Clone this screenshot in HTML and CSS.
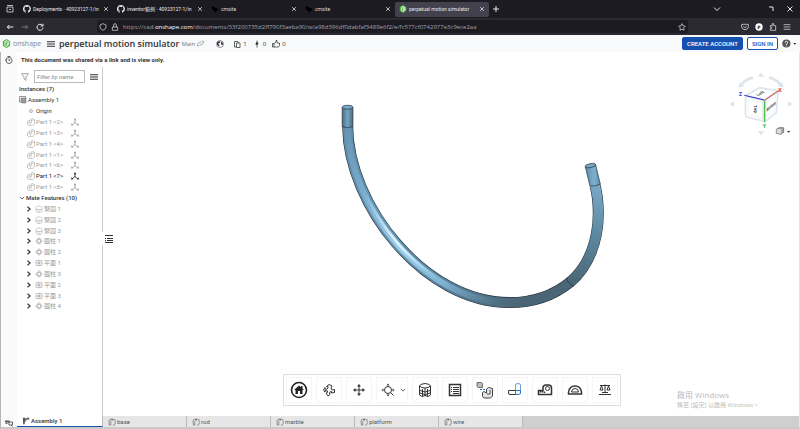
FILE: index.html
```html
<!DOCTYPE html>
<html lang="zh-Hant">
<head>
<meta charset="utf-8">
<title>perpetual motion simulator | Assembly 1</title>
<link rel="stylesheet" href="styles.css">
</head>
<body>
<svg class="defs" aria-hidden="true">
  <symbol id="github" viewBox="0 0 16 16"><path fill="currentColor" d="M8 0a8 8 0 0 0-2.5 15.6c.4.1.5-.2.5-.4v-1.500c-2.200.5-2.700-1-2.700-1-.4-.9-.9-1.200-.9-1.200-.7-.5.1-.5.1-.5.8.1 1.200.8 1.200.8.7 1.300 1.900.9 2.300.7.1-.5.3-.9.5-1.100-1.800-.2-3.600-.9-3.600-4 0-.9.3-1.600.8-2.100-.1-.2-.4-1 .1-2.100 0 0 .7-.2 2.200.8a7.500 7.500 0 0 1 4 0c1.500-1 2.200-.8 2.200-.8.4 1.100.2 1.900.1 2.100.5.6.8 1.300.8 2.100 0 3.100-1.900 3.700-3.700 4 .3.2.6.7.6 1.500v2.200c0 .2.100.5.500.4A8 8 0 0 0 8 0z"/></symbol>
  <symbol id="cross" viewBox="0 0 8 8"><path class="ln" d="M1.500 1.500l5 5M6.500 1.500l-5 5"/></symbol>
  <symbol id="bird" viewBox="0 0 12 12"><path fill="#000" d="M1 3l3-1 2 2 4 1 1 3-3 1-1 3-2-3-3-2z"/></symbol>
  <symbol id="leaf" viewBox="0 0 16 16"><path fill="#4fae45" d="M8 0l6.500 3.800v8L8 16l-6.500-4.200v-8z"/><path fill="none" stroke="#fff" stroke-width="1.500" d="M4 5l4-2 4 2v5l-4 3-3-2V7l3-1.500L10 7v3L8 11"/></symbol>
  <symbol id="part" viewBox="0 0 16 16"><path class="ln" d="M1 7l4-3v4l4 1 1-2-2-1V2l3-1 4 2v9l-4 3H3l-2-2zM8 6l3-2 4 .500M1 10h5l2 4"/></symbol>
  <symbol id="mate" viewBox="0 0 14 14"><path class="ln bold" d="M7 8V2M7 8l-5 4M7 8l5 4"/><path fill="currentColor" d="M7 0l2 4H5zM0 13l1-4 3 3.500zM14 13l-1-4-3 3.500z"/></symbol>
  <symbol id="chev" viewBox="0 0 8 8"><path class="ln bold" d="M2 1l3.500 3L2 7"/></symbol>
  <symbol id="down" viewBox="0 0 8 8"><path class="ln" d="M1 2.500l3 3 3-3"/></symbol>
  <symbol id="fasten" viewBox="0 0 16 16"><path class="ln" d="M2 5l3-3h6l3 3v7l-3 3H5l-3-3zM2 9h12M5 12h6"/></symbol>
  <symbol id="cyl" viewBox="0 0 16 16"><path class="ln" d="M8 1l3 3H5zM8 15l3-3H5zM1 8l3-3v6zM15 8l-3-3v6zM5 5h6v6H5z"/></symbol>
  <symbol id="plane" viewBox="0 0 16 16"><path class="ln" d="M2 3h12v10H2zM8 1v14M1 8h14M5 5l6 6M11 5l-6 6"/></symbol>
  <symbol id="studio" viewBox="0 0 20 20"><path class="ln bold" d="M3 17V5l3-2 3 2M3 17l4 1V8M13 3h2q3 0 3 4v6q0 4-3 5h-3"/><path fill="currentColor" d="M8 2h4v4H9z"/></symbol>
  <symbol id="menu" viewBox="0 0 14 12"><path class="ln thick" d="M0 2h14M0 6h14M0 10h14"/></symbol>
</svg>

<nav class="tabs" aria-label="Browser tabs">
  <button class="history" aria-label="Recent browsing"><svg viewBox="0 0 16 16"><path class="ln bold" d="M2 1h12M2 4h12v10H2zM6 8l2 2 2-2"/></svg></button>
  <div class="tab"><svg class="fav"><use href="#github"/></svg><span>Deployments · 40923127-1/in</span><button aria-label="Close"><svg><use href="#cross"/></svg></button></div>
  <div class="tab"><svg class="fav"><use href="#github"/></svg><span>inventor範例 · 40923127-1/in</span><button aria-label="Close"><svg><use href="#cross"/></svg></button></div>
  <div class="tab"><svg class="fav"><use href="#bird"/></svg><span class="site">cmsite</span><button aria-label="Close"><svg><use href="#cross"/></svg></button></div>
  <div class="tab"><svg class="fav"><use href="#bird"/></svg><span class="site">cmsite</span><button aria-label="Close"><svg><use href="#cross"/></svg></button></div>
  <div class="tab active"><svg class="fav"><use href="#leaf"/></svg><span>perpetual motion simulator</span><button aria-label="Close"><svg><use href="#cross"/></svg></button></div>
  <button class="newtab" aria-label="New tab"><svg viewBox="0 0 8 8"><path class="ln" d="M4 1v6M1 4h6"/></svg></button>
  <div class="window">
    <button aria-label="List tabs"><svg><use href="#down"/></svg></button>
    <button aria-label="Restore"><svg viewBox="0 0 8 8"><path class="ln" d="M2 2h4v4"/></svg></button>
    <button aria-label="Close window"><svg><use href="#cross"/></svg></button>
  </div>
</nav>

<div class="navbar">
  <div class="travel">
    <button aria-label="Back"><svg viewBox="0 0 12 12"><path class="ln bold" d="M11 6H2M5 3L2 6l3 3"/></svg></button>
    <button class="off" aria-label="Forward"><svg viewBox="0 0 12 12"><path class="ln bold" d="M1 6h9M7 3l3 3-3 3"/></svg></button>
    <button aria-label="Reload"><svg viewBox="0 0 12 12"><path class="ln bold" d="M9.500 3.500A4.500 4.500 0 1 0 10.500 7M10.500 1v3.500H7"/></svg></button>
  </div>
  <div class="address">
    <svg viewBox="0 0 12 12"><path class="ln" d="M6 1l4.500 2v3q0 3-4.500 5Q1.500 9 1.500 6V3z"/></svg>
    <svg viewBox="0 0 12 12"><path class="ln" d="M2 6h8v5H2zM4 6V3q0-2 2-2t2 2v3"/></svg>
    <a href="#doc">https://cad.<b>onshape.com</b>/documents/33f200735d2ff790f3aeba90/w/a98d396df0dabfaf3489e6f2/e/fc577cf0742977e3c9ece2aa</a>
    <button aria-label="Bookmark"><svg viewBox="0 0 12 12"><path class="ln" d="M6 1l1.500 3.300 3.500.5-2.500 2.500.6 3.700L6 9.300 2.900 11l.6-3.700L1 4.800l3.500-.5z"/></svg></button>
  </div>
  <div class="extras">
    <button aria-label="Pocket"><svg viewBox="0 0 12 12"><path class="ln" d="M1 2h10v4q-1 4-5 4T1 6zM3.500 5L6 7l2.500-2"/></svg></button>
    <button aria-label="Account"><svg viewBox="0 0 12 12"><circle cx="6" cy="6" r="5.500" fill="#fff"/><path d="M4 4h4v3H6v2H4z" fill="#555"/></svg></button>
    <button aria-label="Extensions"><svg viewBox="0 0 12 12"><path class="ln" d="M2 11V8h2V6H2V4h3V1h2v3h3v7z"/></svg></button>
    <button aria-label="Menu"><svg viewBox="0 0 12 12"><path class="ln" d="M1 2.500h10M1 6h10M1 9.500h10"/></svg></button>
  </div>
</div>

<header class="doc" id="doc">
  <svg class="logo"><use href="#leaf"/></svg>
  <span class="brand">onshape</span>
  <button class="burger" aria-label="Document menu"><svg><use href="#menu"/></svg></button>
  <h1>perpetual motion simulator</h1>
  <span class="branch">Main</span>
  <svg class="link" viewBox="0 0 12 12"><path class="ln" d="M5 8L3.500 9.500q-1.500 1-2.500 0t0-2.500l3-3q1.500-1 2.500 0M7 4l1.500-1.500q1.500-1 2.500 0t0 2.500l-3 3q-1.500 1-2.500 0"/></svg>
  <svg class="globe" viewBox="0 0 16 16"><circle class="ln" cx="8" cy="8" r="7"/><path fill="currentColor" d="M2 5l4-3 3 2-2 2-3 1 3 3-1 3-4-4zM10 3l4 3-1 5-3-3z"/></svg>
  <span class="stat"><svg viewBox="0 0 14 16"><path class="ln bold" d="M2 3h7v3M2 3v11h4M6 6h7v9H6z"/></svg>1</span>
  <span class="stat"><svg viewBox="0 0 8 16"><path class="ln bold" d="M4 1v14M1 8h3"/><circle cx="4" cy="7" r="2.500" fill="currentColor"/></svg>0</span>
  <span class="stat"><svg viewBox="0 0 16 16"><path class="ln bold" d="M1 7h3v7H1zM4 8l4-4V1h2v5h5v5l-2 3H4"/></svg>0</span>
  <div class="signup">
    <button class="create">CREATE ACCOUNT</button>
    <button class="signin">SIGN IN</button>
    <button class="help" aria-label="Help"><svg viewBox="0 0 24 14"><circle cx="7" cy="7" r="6.500" fill="#555"/><path fill="none" stroke="#fff" stroke-width="1.500" d="M5 5.500q0-2 2-2t2 2T7 8v1M7 10v1.500"/><path fill="#333" d="M18 6h5l-2.500 3z"/></svg></button>
  </div>
</header>

<div class="app">
  <aside class="rail">
    <button aria-label="Versions and history"><svg viewBox="0 0 16 16"><circle class="ln bold" cx="8" cy="9" r="6"/><path class="ln bold" d="M5 1h6M8 6v3h2M0 8h3"/></svg></button>
    <button aria-label="Tab manager"><svg viewBox="0 0 16 16"><path fill="#555" d="M0 3h9v4H0z"/><path class="ln bold" d="M1 9h4M8 6h7v6H8zM12 12l3 3"/></svg></button>
  </aside>
  <div class="page">
    <p class="notice">This document was shared via a link and is view only.</p>
    <div class="work">
      <section class="side">
        <div class="filter">
          <svg viewBox="0 0 12 12"><path class="ln" d="M1 1h10L7.500 6v5l-3-2V6z"/></svg>
          <input type="text" aria-label="Filter by name" placeholder="Filter by name">
          <button aria-label="List options"><svg><use href="#menu"/></svg></button>
        </div>
        <h2>Instances (7)</h2>
        <ul class="tree">
          <li class="root"><svg viewBox="0 0 16 16"><path class="ln" d="M1 1h12v11H1z"/><path fill="#999" stroke="#666" d="M4 4h10v10H6l-2-2z"/></svg>Assembly 1</li>
          <li class="origin"><svg viewBox="0 0 12 12"><circle cx="6" cy="6" r="2.500" fill="#ddd" stroke="#aaa"/></svg>Origin</li>
          <li class="inst"><svg><use href="#part"/></svg><span>Part 1 &lt;2&gt;</span><svg><use href="#mate"/></svg></li>
          <li class="inst"><svg><use href="#part"/></svg><span>Part 1 &lt;3&gt;</span><svg><use href="#mate"/></svg></li>
          <li class="inst"><svg><use href="#part"/></svg><span>Part 1 &lt;4&gt;</span><svg><use href="#mate"/></svg></li>
          <li class="inst"><svg><use href="#part"/></svg><span>Part 1 &lt;1&gt;</span><svg><use href="#mate"/></svg></li>
          <li class="inst"><svg><use href="#part"/></svg><span>Part 1 &lt;6&gt;</span><svg><use href="#mate"/></svg></li>
          <li class="inst shown"><svg><use href="#part"/></svg><span>Part 1 &lt;7&gt;</span><svg><use href="#mate"/></svg></li>
          <li class="inst"><svg><use href="#part"/></svg><span>Part 1 &lt;5&gt;</span><svg><use href="#mate"/></svg></li>
          <li class="group"><svg><use href="#down"/></svg>Mate Features (10)</li>
          <li class="feat"><svg><use href="#chev"/></svg><svg><use href="#fasten"/></svg>緊固 1</li>
          <li class="feat"><svg><use href="#chev"/></svg><svg><use href="#fasten"/></svg>緊固 2</li>
          <li class="feat"><svg><use href="#chev"/></svg><svg><use href="#fasten"/></svg>緊固 3</li>
          <li class="feat"><svg><use href="#chev"/></svg><svg><use href="#cyl"/></svg>圓柱 1</li>
          <li class="feat"><svg><use href="#chev"/></svg><svg><use href="#cyl"/></svg>圓柱 2</li>
          <li class="feat"><svg><use href="#chev"/></svg><svg><use href="#plane"/></svg>平面 1</li>
          <li class="feat"><svg><use href="#chev"/></svg><svg><use href="#cyl"/></svg>圓柱 3</li>
          <li class="feat"><svg><use href="#chev"/></svg><svg><use href="#plane"/></svg>平面 2</li>
          <li class="feat"><svg><use href="#chev"/></svg><svg><use href="#plane"/></svg>平面 3</li>
          <li class="feat"><svg><use href="#chev"/></svg><svg><use href="#cyl"/></svg>圓柱 4</li>
        </ul>
      </section>
      <main class="canvas">
        <svg class="model" viewBox="103 67 697 349" role="img" aria-label="Wire part">
          <defs>
            <linearGradient id="body" gradientUnits="userSpaceOnUse" x1="343" y1="120" x2="604" y2="290">
              <stop offset="0" stop-color="#5f8ba6"/><stop offset=".35" stop-color="#6494b2"/><stop offset=".6" stop-color="#577d94"/><stop offset=".8" stop-color="#4a6676"/><stop offset="1" stop-color="#4a6676"/>
            </linearGradient>
            <linearGradient id="shine" gradientUnits="userSpaceOnUse" x1="348" y1="127" x2="510" y2="303">
              <stop offset="0" stop-color="#78a9c8" stop-opacity=".3"/><stop offset=".3" stop-color="#7fb2d2"/><stop offset=".52" stop-color="#9fd0ea"/><stop offset=".75" stop-color="#7fb2d2"/><stop offset=".98" stop-color="#6793ae" stop-opacity="0"/>
            </linearGradient>
            <linearGradient id="glint" gradientUnits="userSpaceOnUse" x1="348" y1="127" x2="510" y2="303">
              <stop offset=".25" stop-color="#c8ecff" stop-opacity="0"/><stop offset=".5" stop-color="#e4f7ff"/><stop offset=".72" stop-color="#c8ecff" stop-opacity="0"/>
            </linearGradient>
            <linearGradient id="arm" gradientUnits="userSpaceOnUse" x1="596" y1="185" x2="571" y2="282">
              <stop offset="0" stop-color="#77a9c8"/><stop offset=".5" stop-color="#5d879f"/><stop offset="1" stop-color="#4a6676"/>
            </linearGradient>
            <linearGradient id="cap" x1="0" x2="1" y1="0" y2="0">
              <stop offset="0" stop-color="#4c6c80"/><stop offset=".5" stop-color="#73a4c2"/><stop offset="1" stop-color="#4c6c80"/>
            </linearGradient>
            <linearGradient id="tip" x1="0" x2="1" y1="0" y2="0">
              <stop offset="0" stop-color="#5f8ba6"/><stop offset=".6" stop-color="#7db0cf"/><stop offset="1" stop-color="#5f8ba6"/>
            </linearGradient>
          </defs>
          <g fill="none">
            <path stroke="#24323b" stroke-width="11" d="M348 126C348.500 205 425 302.700 510 302.700C535 302.700 555 295 571 282C590 266 599 240 599 213C599 203 598 194 595.700 185"/>
            <path stroke="url(#body)" stroke-width="9.800" d="M348 126C348.500 205 425 302.700 510 302.700C535 302.700 555 295 571 282C590 266 599 240 599 213"/>
            <path stroke="url(#arm)" stroke-width="9.800" d="M571 282C590 266 599 240 599 213C599 203 598 194 595.700 185"/>
            <path stroke="url(#shine)" stroke-width="6" d="M348 126C348.500 205 425 302.700 510 302.700"/>
            <path stroke="url(#glint)" stroke-width="2.500" d="M349 126C349.500 205 426 301.700 511 301.700"/>
          </g>
          <g stroke="#24323b" stroke-width=".7">
            <path fill="url(#cap)" d="M342.500 107v19.500q5.500 2 10.800 0V107z"/>
            <ellipse cx="347.900" cy="107" rx="5.300" ry="2" fill="#78a9c8"/>
            <path fill="url(#tip)" d="M586 166.500l4.500 19q6 1.500 10.500-1.500L596.300 164.500z"/>
            <ellipse cx="591.100" cy="165.500" rx="5.200" ry="1.900" fill="#78a9c8" transform="rotate(-11 591 165.500)"/>
            <path fill="none" d="M567.500 277.500q-.5 5 6.500 8.500"/>
          </g>
        </svg>
        <button class="expand" aria-label="Toggle list"><svg viewBox="0 0 8 8"><path class="ln" d="M0 .5h8M2 3.500h6M2 5.500h6M0 7.500h8M0 3.500h1M0 5.500h1"/></svg></button>
        <svg class="cube" viewBox="0 0 300 270" role="img" aria-label="View cube">
          <g fill="#dde5ec"><path d="M176 50l10-12 10 12zM92 132l13-9v19zM280 132l-13-9v19zM176 214h20l-10 12zM118 83l4-16 14 11zM254 83l-4-16-14 11z"/></g>
          <g fill="none" stroke="#dde5ec"><path stroke-width="8" d="M128 72q16-16 34-19M244 72q-16-16-34-19"/><path stroke-width="5" fill="#fff" d="M140 114q0-5 5-4l48 11v62l-50-12q-4-2-4-8zM142 106l40-23 54 9-38 28zM199 121l38-25-5 62-33 26z"/></g>
          <g fill="#fff" stroke="#e8edf2" stroke-width="2"><path d="M147 119l42 9v46l-42-10zM203 126l27-18-4 44-23 18z"/></g>
          <path stroke="#2f2fd0" stroke-width="3" d="M136 106l60 14"/><path stroke="#e04040" stroke-width="3" d="M197 120l42-28"/><path stroke="#32b232" stroke-width="3" d="M197 121v66"/>
          <text x="120" y="108" fill="#2f2fd0">Z</text><text x="238" y="96" fill="#e02020">X</text><text x="191" y="204" fill="#32b232">Y</text>
          <text class="face" transform="matrix(.9 -.5 .6 .6 176 109)">Left</text><text class="face" transform="matrix(.1 1 -1 .2 164 137)">Top</text><text class="face" transform="matrix(.6 -.5 0 1.200 203 155)">Bottom</text>
          <path fill="#aaa" stroke="#555" stroke-width="2" d="M232 208l8-5h14v14l-8 6-14-3z"/><path fill="#ddd" d="M233 208h13v13l-13-2z"/><path fill="#333" d="M264 213h10l-5 5z"/>
        </svg>
        <div class="toolbar" role="toolbar" aria-label="View tools">
          <button aria-label="Home"><svg viewBox="0 0 18 18"><circle cx="9" cy="9" r="7.500" fill="none" stroke="#222" stroke-width="1.600"/><path fill="#222" d="M4 9l5-4.500 2 1.800V5h1.500v2.600L14 9h-1.500v4H10v-3H8v3H5.500V9z"/></svg></button>
          <button aria-label="Rotate"><svg viewBox="0 0 18 18"><path class="ln" d="M8 7V5.500H6.500L9 3.500l3 1.500-1 2q0 2 2 2l1.500-.5v3l-3 .5v-1.500q-2 0-2 1.500l.5 1.500L8 15l-2-3q2 0 1.500-2L5 9.500v1.500L3.500 9 5 6.500V8q2 1 3-1z"/></svg></button>
          <button aria-label="Pan"><svg viewBox="0 0 18 18"><path class="ln" d="M9 4v10M4 9h10"/><path fill="#333" d="M9 3l2 2.500H7zM9 15l2-2.500H7zM3 9l2.500-2v4zM15 9l-2.500-2v4z"/></svg></button>
          <button class="wide" aria-label="Zoom"><svg viewBox="0 0 18 18"><circle class="ln" cx="9" cy="9" r="3.500"/><path class="ln" d="M11.500 11.500l3 3"/><path fill="#333" d="M9 2.500l1.500 2h-3zM9 15.500l1.500-2h-3zM2.500 9l2-1.500v3zM15.500 9l-2-1.500v3z"/></svg><svg class="drop"><use href="#down"/></svg></button>
          <button aria-label="Section view"><svg viewBox="0 0 18 18"><path class="ln" d="M3.500 5q0-2 5.500-2.500 5.500.5 5.500 2.500v9l-2.500 1.500-3-1-3 1L3.500 14zM3.500 5q2 2 5.500 2t5.500-2M6.500 8v7M11.500 8v7M9 7v8M4 9.500l5 1.500 5-1.500M4 12l5 1.500L14 12"/></svg></button>
          <button aria-label="Bill of materials"><svg viewBox="0 0 18 18"><path class="ln bold" d="M3.500 3.500h11v11h-11z"/><path class="ln" d="M5 6.500h1M7 6.500h6M5 8.500h1M7 8.500h6M5 10.500h1M7 10.500h6M7 12.500h6"/></svg></button>
          <button aria-label="Exploded view"><svg viewBox="0 0 18 18"><path fill="#bbb" stroke="#555" stroke-width=".8" d="M1 1.500h4.500l1 1v4H2.500L1 5.500z"/><path stroke="#2871c8" stroke-width="1.200" stroke-dasharray="2 1" d="M4 8.500h6"/><path fill="#e4e4e4" stroke="#444" d="M6.500 11.500L8 10.500l2.500 1.500V8l2-1.500 4 1v7.500L14.500 17H8l-1.500-1.500zM11 13h3V9"/></svg></button>
          <button aria-label="Named positions"><svg viewBox="0 0 18 18"><path fill="none" stroke="#6fa3dd" d="M9.500 10V4q0-1.500 2.500-1.500T14.500 4v6"/><path class="ln" d="M2.500 9.500h7v4H4q-1.500 0-1.500-1.500z"/><path fill="none" stroke="#2871c8" d="M9.500 9.500h5V12q0 1.500-2.500 1.500H9.500z"/></svg></button>
          <button aria-label="Measure"><svg viewBox="0 0 18 18"><path class="ln bold" d="M2.500 9.500H7V7q0-3 3-3h2.500q3 0 3 3v6.500h-13zM4.500 10v1.500M6.500 10v1.500M8.500 10.500v1.500"/><circle class="ln" cx="11.500" cy="7.500" r="2"/></svg></button>
          <button aria-label="Angle"><svg viewBox="0 0 18 18"><path class="ln bold" d="M2.500 13v-2q1-6 6.500-6t6.500 6v2z"/><path class="ln" d="M5.500 11q0-3.500 3.500-3.500t3.500 3.500z"/></svg></button>
          <button aria-label="Mass properties"><svg viewBox="0 0 18 18"><path class="ln" d="M9 3.500V12M4 4.500h10M3 13.500h12M6 11.500h6M5.500 5L4 9h3zM12.500 5L11 9h3z"/></svg></button>
        </div>
        <div class="activate"><strong>啟用 Windows</strong><span>移至 [設定] 以啟用 Windows。</span></div>
      </main>
    </div>
    <nav class="sheets" aria-label="Document tabs">
      <a class="current" href="#assembly"><svg viewBox="0 0 20 20"><path fill="#555" d="M2 2h7v4h2V2h7v4h-5v2H9v4H7v6H3z"/></svg>Assembly 1</a>
      <a href="#base"><svg><use href="#studio"/></svg>base</a>
      <a href="#rod"><svg><use href="#studio"/></svg>rod</a>
      <a href="#marble"><svg><use href="#studio"/></svg>marble</a>
      <a href="#platform"><svg><use href="#studio"/></svg>platform</a>
      <a href="#wire"><svg><use href="#studio"/></svg>wire</a>
    </nav>
  </div>
</div>
</body>
</html>
```

FILE: styles.css
```css
* { box-sizing: border-box; }
body {
  margin: 0;
  height: 100vh;
  display: flex;
  flex-direction: column;
  overflow: hidden;
  background: #fff;
  color: #333;
  font: 6px/10px Roboto, "Noto Sans CJK TC", sans-serif;
}
button { border: 0; padding: 0; background: none; color: inherit; font: inherit; display: flex; align-items: center; justify-content: center; }
a { color: inherit; text-decoration: none; }
svg { flex: none; display: block; width: 8px; height: 8px; }
.defs { position: absolute; width: 0; height: 0; }
.ln { fill: none; stroke: currentColor; stroke-width: 1; }
.bold { stroke-width: 1.5; }
.thick { stroke-width: 2; }

/* Browser chrome */
.tabs { display: flex; align-items: center; height: 18px; flex: none; background: #1c1b22; color: #e8e8ee; }
.history { width: 19px; }
.tab { display: flex; align-items: center; width: 94px; height: 15px; padding: 0 4px; gap: 2px; font-size: 5px; }
.tab span { flex: 1; white-space: nowrap; }
.tab .site { color: #e3d4c4; }
.tab button svg { width: 6px; height: 6px; }
.active { background: #42414d; border-radius: 2px; }
.newtab { width: 14px; }
.window { display: flex; gap: 11px; margin-left: auto; padding-right: 6px; }
.window button:first-child { margin-right: 35px; }

.navbar { display: flex; align-items: center; height: 17px; flex: none; background: #2b2a33; color: #f0f0f4; }
.travel { display: flex; gap: 7px; padding: 0 6px; width: 97px; }
.off { color: #777680; }
.address { display: flex; flex: 1; align-items: center; gap: 4px; height: 13px; padding: 0 2px; border-radius: 2px; background: #1c1b22; color: #a3a2ae; }
.address svg { color: #e8e8ee; }
.address a { flex: 1; white-space: nowrap; font-family: "Open Sans", sans-serif; }
.address b { font-weight: 400; color: #fff; }
.extras { display: flex; justify-content: space-between; width: 112px; padding: 0 9px 0 53px; }

/* Document header */
.doc { display: flex; align-items: center; height: 17px; flex: none; background: #f8f9fb; padding: 0 0 0 2px; font-family: "Open Sans", sans-serif; }
.doc .logo { width: 9px; height: 9px; }
.brand { width: 34px; padding-left: 2px; font-size: 7px; color: #888; }
.burger { margin: 0 4px 0 2px; }
.doc h1 { margin: 0; font-size: 9px; line-height: 16px; font-weight: 600; white-space: nowrap; }
.branch { margin: 0 2px; font-size: 6px; color: #777; }
.link { width: 7px; height: 7px; color: #666; }
.globe { margin: 0 9px 0 12px; }
.stat { display: flex; align-items: center; gap: 2px; margin-right: 6px; font-size: 6px; }
.signup { display: flex; align-items: center; gap: 4px; margin-left: auto; padding-right: 3px; font-family: Roboto, sans-serif; }
.create, .signin { height: 13px; border: 1px solid #1651b0; border-radius: 2px; padding: 0 4px; font-weight: 500; }
.create { background: #1651b0; color: #fff; }
.signin { background: #fff; color: #1651b0; }
.help svg { width: 15px; height: 9px; }

/* Application */
.app { display: flex; flex: 1; min-height: 0; border-left: 1px solid #b5b5b5; border-right: 1px solid #dce8f0; border-bottom: 2px solid #cacaca; }
.rail { display: flex; flex-direction: column; justify-content: space-between; width: 16px; padding: 4px 4px 0; background: #fafafa; }
.page { display: flex; flex-direction: column; flex: 1; min-width: 0; }
.notice { margin: 0; padding: 3px 4px 2px; line-height: 10px; font-weight: 700; }
.work { display: flex; flex: 1; min-height: 0; }
.side { width: 86px; border-right: 1px solid #ccc; padding: 3px 2px 0; }
.filter { display: flex; align-items: center; gap: 5px; padding: 0 4px 0 2px; }
.filter > svg { color: #777; }
.filter input { width: 51px; height: 13px; border: 1px solid #bbb; padding: 0 2px; font: 6px/10px Roboto, sans-serif; }
.filter input::placeholder { color: #888; font-style: italic; }
.side h2 { margin: 1px 0; font-size: 6px; line-height: 10px; font-weight: 500; }
.tree { display: flex; flex-direction: column; height: 217px; margin: 0; padding: 0; list-style: none; }
.tree li { display: flex; flex: 1; align-items: center; gap: 1px; white-space: nowrap; }
.tree .origin { padding-left: 8px; color: #333; }
.tree .inst { padding-left: 8px; color: #999; }
.tree .inst span { width: 34px; }
.tree .shown { color: #222; }
.tree .shown svg:first-child { color: #999; }
.tree .feat { padding-left: 7px; color: #999; }
.tree .feat svg:first-child { width: 6px; margin-right: 2px; color: #333; }
.tree .group { font-weight: 500; }
.tree .group svg { width: 6px; }

.canvas { position: relative; flex: 1; min-width: 0; }
.model { width: 100%; height: 100%; }
.expand { position: absolute; left: -1px; top: 165px; width: 14px; height: 13px; background: #fff; }
.cube { position: absolute; top: -7px; right: 0; width: 100px; height: 90px; }
.cube text { font: 700 15px "Open Sans", sans-serif; }
.cube .face { font-size: 12px; fill: #333; }
.toolbar { position: absolute; left: 180px; bottom: 10px; display: flex; gap: 4px; padding: 2px; border: 1px solid #ddd; background: #fff; }
.toolbar button { width: 26px; height: 26px; border: 1px solid #f5f5f5; color: #333; }
.toolbar svg { width: 18px; height: 18px; }
.toolbar .wide { width: 32px; }
.toolbar .drop { width: 6px; height: 6px; margin-left: 3px; }
.activate { position: absolute; right: 36px; bottom: 7px; width: 86px; color: #bbb; white-space: nowrap; font-family: "Open Sans", "Noto Sans CJK TC", sans-serif; }
.activate strong { display: block; font-size: 8px; line-height: 12px; font-weight: 400; }
.activate span { line-height: 8px; display: block; }

.sheets { display: flex; height: 11px; flex: none; background: #cfcfcf; }
.sheets a { display: flex; align-items: center; gap: 1px; width: 84px; padding: 0 5px; background: #e6e6e6; border-right: 1px solid #bbb; color: #555; }
.sheets .current { width: 86px; background: #fff; border-bottom: 1px solid #1651b0; font-weight: 500; color: #333; }
```
